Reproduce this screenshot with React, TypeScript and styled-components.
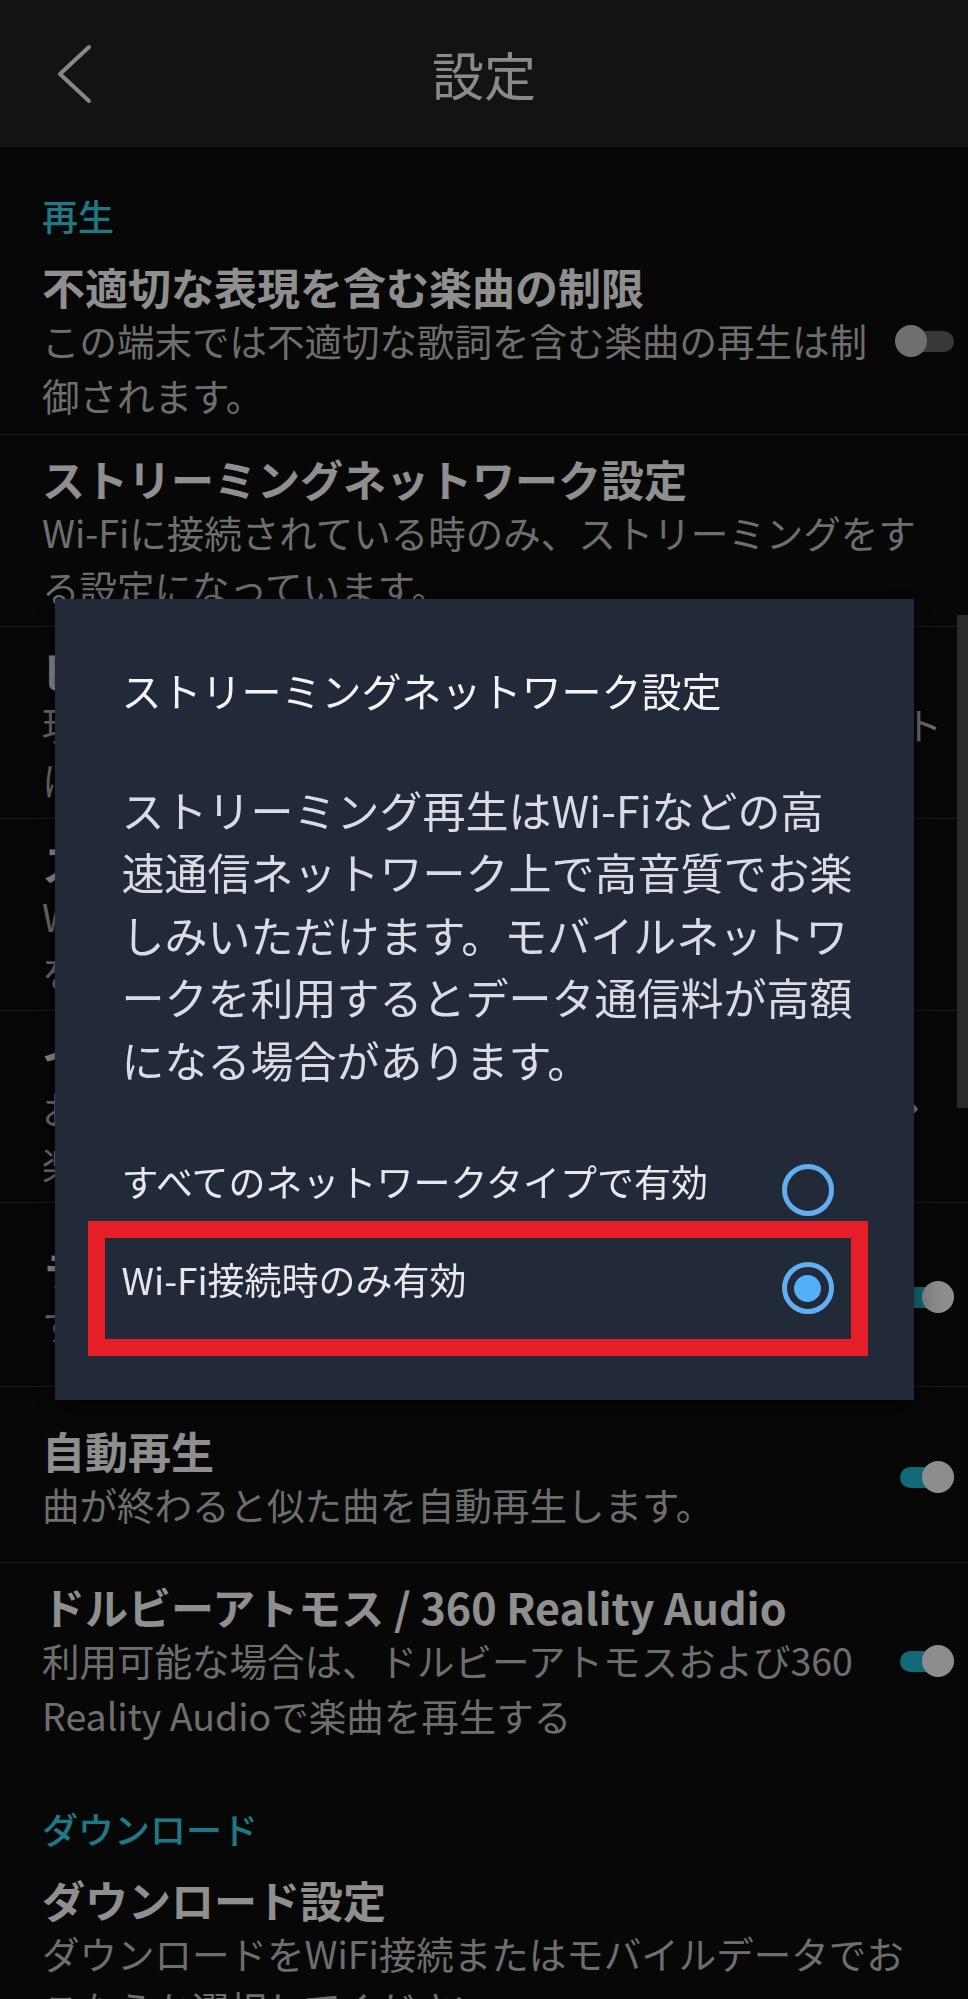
import React from 'react';
import styled, { createGlobalStyle } from 'styled-components';

const GlobalStyle = createGlobalStyle`
  html, body {
    margin: 0;
    padding: 0;
    background: #0c0c0c;
  }
  body {
    font-family: "Noto Sans CJK JP", "Noto Sans", sans-serif;
    -webkit-font-smoothing: antialiased;
  }
  * {
    box-sizing: border-box;
  }
`;

type Control = 'on' | 'off' | 'chevron' | undefined;

type Item = {
  title: string;
  sub: string[];
  control?: Control;
  minH?: number;
  last?: boolean;
};

const playback: Item[] = [
  {
    title: '不適切な表現を含む楽曲の制限',
    sub: ['この端末では不適切な歌詞を含む楽曲の再生は制', '御されます。'],
    control: 'off',
  },
  {
    title: 'ストリーミングネットワーク設定',
    sub: ['Wi-Fiに接続されている時のみ、ストリーミングをす', 'る設定になっています。'],
  },
  {
    title: 'ビットレートの表示',
    sub: ['現在の設定では高音質のストリーミングがデフォルト', 'に設定されています。'],
  },
  {
    title: 'ストリーミング音質',
    sub: ['Wi-Fi接続時とモバイルネットワーク接続時の音質', 'を選択します。'],
  },
  {
    title: 'イコライザー',
    sub: ['お使いの端末のイコライザーを使って音質を調整', '楽曲ごとに最適なサウンドで再生します。'],
    control: 'chevron',
  },
  {
    title: 'ラウドネスノーマライゼーション',
    sub: ['すべての楽曲を同じ音量レベルで再生します。'],
    control: 'on',
    minH: 184,
  },
  {
    title: '自動再生',
    sub: ['曲が終わると似た曲を自動再生します。'],
    control: 'on',
    minH: 176,
  },
  {
    title: 'ドルビーアトモス / 360 Reality Audio',
    sub: ['利用可能な場合は、ドルビーアトモスおよび360', 'Reality Audioで楽曲を再生する'],
    control: 'on',
    last: true,
  },
];

const download: Item[] = [
  {
    title: 'ダウンロード設定',
    sub: ['ダウンロードをWiFi接続またはモバイルデータでお', 'こなうか選択してください。'],
  },
];

const Screen = styled.div`
  position: relative;
  width: 968px;
  height: 1999px;
  overflow: hidden;
  background: #0c0c0c;
`;

const Header = styled.header`
  height: 147px;
  background: #202020;
  display: grid;
  grid-template-columns: 1fr auto 1fr;
  align-items: center;
`;

const BackButton = styled.button`
  justify-self: start;
  margin-left: 55px;
  padding: 0;
  border: 0;
  background: none;
  display: flex;
  color: #e2e2e2;
`;

const HeaderTitle = styled.h1`
  margin: 0;
  font-size: 52px;
  font-weight: 400;
  line-height: 1;
  color: #e6e6e6;
`;

const SectionLabel = styled.div<{ $top: number }>`
  padding: ${(p) => p.$top}px 42px 6px;
  font-size: 36px;
  font-weight: 500;
  line-height: 44px;
  color: #35c8e0;
`;

const Row = styled.div<{ $minH?: number; $last?: boolean }>`
  display: flex;
  align-items: center;
  gap: 16px;
  padding: 17px 14px 12px 42px;
  min-height: ${(p) => (p.$minH ? `${p.$minH}px` : 'auto')};
  border-bottom: ${(p) => (p.$last ? 'none' : '1px solid #2e2e2e')};
`;

const RowText = styled.div`
  flex: 1;
  min-width: 0;
  white-space: nowrap;
`;

const RowTitle = styled.div`
  font-size: 43px;
  font-weight: 700;
  line-height: 52px;
  color: #eeeeee;
`;

const RowSub = styled.div`
  font-size: 37.5px;
  line-height: 55px;
  color: #b8b8b8;
`;

const Switch = styled.span<{ $on: boolean }>`
  position: relative;
  flex: none;
  width: 59px;
  height: 32px;
  &::before {
    content: '';
    position: absolute;
    left: 5px;
    right: 0;
    top: 5.5px;
    height: 21px;
    border-radius: 11px;
    background: ${(p) => (p.$on ? '#21afc8' : '#5e5e5e')};
  }
  &::after {
    content: '';
    position: absolute;
    top: 0;
    left: ${(p) => (p.$on ? 27 : 0)}px;
    width: 32px;
    height: 32px;
    border-radius: 50%;
    background: ${(p) => (p.$on ? '#ececec' : '#b9b9b9')};
  }
`;

const ChevronBox = styled.span`
  flex: none;
  width: 59px;
  display: flex;
  padding-left: 4px;
  color: #d0d0d0;
`;

const ScrollThumb = styled.div`
  position: absolute;
  right: 0;
  top: 615px;
  width: 11px;
  height: 493px;
  background: #464646;
`;

const Backdrop = styled.div`
  position: fixed;
  inset: 0;
  background: rgba(0, 0, 0, 0.4);
  display: flex;
  align-items: center;
  justify-content: center;
`;

const Dialog = styled.div`
  width: 859px;
  background: #222a3a;
  padding: 63px 80px 63px 67px;
  box-shadow: 0 10px 30px rgba(0, 0, 0, 0.5);
`;

const DialogTitle = styled.h2`
  margin: 0;
  font-size: 40px;
  font-weight: 400;
  line-height: 56px;
  color: #f4f4f4;
  white-space: nowrap;
`;

const DialogBody = styled.p`
  margin: 60px 0 51px;
  font-size: 43px;
  line-height: 62.5px;
  color: #d9dce2;
  white-space: nowrap;
`;

const Option = styled.label`
  position: relative;
  display: flex;
  align-items: center;
  justify-content: space-between;
  height: 98px;
`;

const OptionText = styled.span`
  font-size: 37px;
  line-height: 48px;
  padding-bottom: 18px;
  color: #e6e8ec;
  white-space: nowrap;
`;

const Radio = styled.span<{ $checked: boolean }>`
  flex: none;
  width: 52px;
  height: 52px;
  border-radius: 50%;
  border: 5px solid #62aef0;
  display: grid;
  place-items: center;
  &::after {
    content: '';
    display: ${(p) => (p.$checked ? 'block' : 'none')};
    width: 27px;
    height: 27px;
    border-radius: 50%;
    background: #55aef8;
  }
`;

const Highlight = styled.span`
  position: absolute;
  top: -18px;
  bottom: -19px;
  left: -34px;
  right: -34px;
  border: 17px solid #e61e27;
  pointer-events: none;
`;

const Lines = ({ lines }: { lines: string[] }) => (
  <>
    {lines.map((l, i) => (
      <React.Fragment key={i}>
        {l}
        {i < lines.length - 1 && <br />}
      </React.Fragment>
    ))}
  </>
);

const SettingRow = ({ item }: { item: Item }) => (
  <Row $minH={item.minH} $last={item.last}>
    <RowText>
      <RowTitle>{item.title}</RowTitle>
      {item.sub.map((s, i) => (
        <RowSub key={i}>{s}</RowSub>
      ))}
    </RowText>
    {(item.control === 'on' || item.control === 'off') && <Switch $on={item.control === 'on'} />}
    {item.control === 'chevron' && (
      <ChevronBox>
        <svg width="20" height="34" viewBox="0 0 20 34" fill="none">
          <polyline points="3,3 17,17 3,31" stroke="currentColor" strokeWidth="3.5" strokeLinecap="round" strokeLinejoin="round" />
        </svg>
      </ChevronBox>
    )}
  </Row>
);

export default function App() {
  return (
    <>
      <GlobalStyle />
      <Screen>
        <Header>
          <BackButton aria-label="戻る">
            <svg width="38" height="60" viewBox="0 0 38 60" fill="none">
              <polyline points="34,3 5,30 34,57" stroke="currentColor" strokeWidth="4" strokeLinecap="round" strokeLinejoin="round" />
            </svg>
          </BackButton>
          <HeaderTitle>設定</HeaderTitle>
          <span />
        </Header>

        <SectionLabel $top={46}>再生</SectionLabel>
        {playback.map((item) => (
          <SettingRow key={item.title} item={item} />
        ))}

        <SectionLabel $top={52}>ダウンロード</SectionLabel>
        {download.map((item) => (
          <SettingRow key={item.title} item={item} />
        ))}

        <ScrollThumb />
      </Screen>

      <Backdrop>
        <Dialog role="dialog">
          <DialogTitle>ストリーミングネットワーク設定</DialogTitle>
          <DialogBody>
            <Lines
              lines={[
                'ストリーミング再生はWi-Fiなどの高',
                '速通信ネットワーク上で高音質でお楽',
                'しみいただけます。モバイルネットワ',
                'ークを利用するとデータ通信料が高額',
                'になる場合があります。',
              ]}
            />
          </DialogBody>
          <Option>
            <OptionText>すべてのネットワークタイプで有効</OptionText>
            <Radio $checked={false} />
          </Option>
          <Option>
            <OptionText>Wi-Fi接続時のみ有効</OptionText>
            <Radio $checked />
            <Highlight />
          </Option>
        </Dialog>
      </Backdrop>
    </>
  );
}
